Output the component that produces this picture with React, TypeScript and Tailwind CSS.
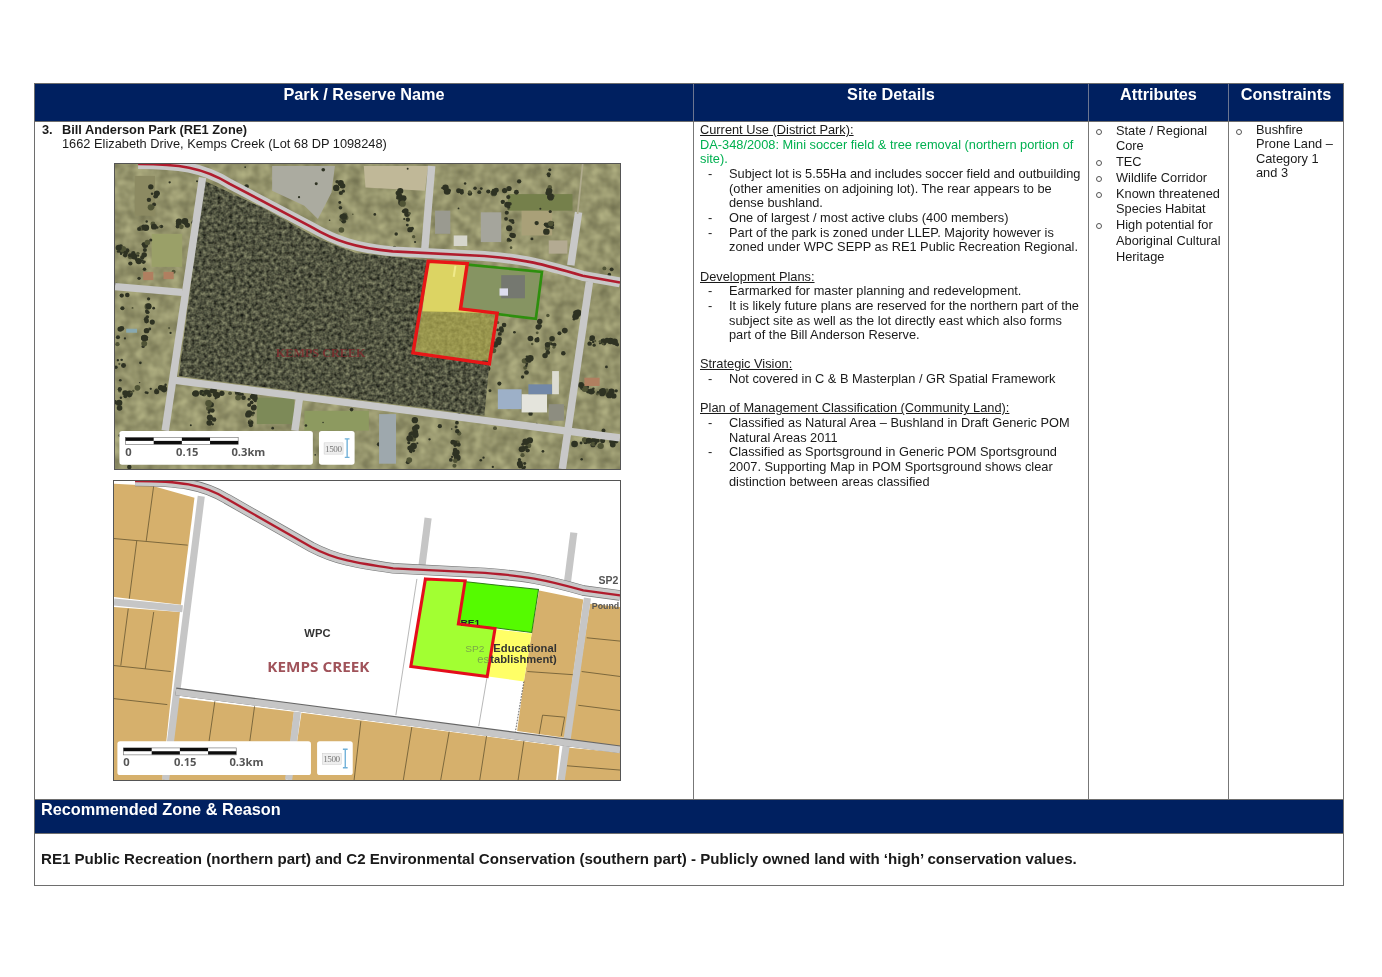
const font = { fontFamily: '"Liberation Sans", Arial, sans-serif' };

// seeded random so the map looks the same on every render
function makeRandom(seed: number) {
  let s = seed;
  return () => {
    s = (s * 16807) % 2147483647;
    return (s - 1) / 2147483646;
  };
}

function HeaderCell({ children, last }: { children: string; last?: boolean }) {
  return (
    <div className={`h-full pt-[1px] text-center text-[16.3px] leading-[19px] font-bold text-white ${last ? "" : "border-r border-[#6b7590]"}`}>
      {children}
    </div>
  );
}

function Underlined({ children }: { children: string }) {
  return <div className="underline underline-offset-1">{children}</div>;
}

function DashItem({ lines }: { lines: string[] }) {
  return (
    <div className="flex">
      <span className="w-[29px] pl-[8px]">-</span>
      <div className="whitespace-nowrap">
        {lines.map((l) => (
          <div key={l}>{l}</div>
        ))}
      </div>
    </div>
  );
}

function CircleItem({ lines }: { lines: string[] }) {
  return (
    <div className="flex">
      <span className="w-[27px] pl-[7px] pt-[6px]">
        <span className="block h-[6px] w-[6px] rounded-full border border-[#555]" />
      </span>
      <div className="whitespace-nowrap">
        {lines.map((l) => (
          <div key={l}>{l}</div>
        ))}
      </div>
    </div>
  );
}

function ScaleLegend({ x, y }: { x: number; y: number }) {
  return (
    <g transform={`translate(${x} ${y})`}>
      <rect x="0" y="0" width="570" height="102" rx="8" fill="#fff" />
      <rect x="18" y="20" width="332" height="21" fill="#fff" stroke="#777" strokeWidth="2" />
      <rect x="18" y="20" width="83" height="10" fill="#111" />
      <rect x="101" y="30" width="83" height="10" fill="#111" />
      <rect x="184" y="20" width="83" height="10" fill="#111" />
      <rect x="267" y="30" width="83" height="10" fill="#111" />
      <g fontFamily='"Open Sans", sans-serif' fontWeight="700" fontSize="33" fill="#555">
        <text x="17" y="76">0</text>
        <text x="167" y="76">0.15</text>
        <text x="330" y="76">0.3km</text>
      </g>
      <rect x="588" y="0" width="105" height="102" rx="8" fill="#fff" />
      <rect x="603" y="36" width="56" height="34" fill="#eee" stroke="#bbb" />
      <text x="606" y="63" fontFamily='"Liberation Serif", serif' fontSize="27" fill="#777" textLength="50">1500</text>
      <path d="M664 24h14M671 24v56M664 80h14" stroke="#6fb0d8" strokeWidth="4" fill="none" />
    </g>
  );
}

// fence lines in the aerial photo, trees grow along them
const fenceLines = [
  [110, 215, 270, 200],
  [165, 40, 120, 390],
  [50, 280, 130, 320],
  [45, 720, 200, 700],
  [70, 410, 45, 800],
  [150, 420, 130, 620],
  [240, 720, 420, 720],
  [335, 690, 320, 820],
  [450, 710, 440, 820],
  [700, 60, 720, 230],
  [880, 100, 920, 260],
  [1000, 100, 1230, 110],
  [1190, 120, 1220, 300],
  [1330, 40, 1320, 240],
  [1180, 500, 1130, 660],
  [1290, 500, 1250, 650],
  [1420, 460, 1300, 600],
  [930, 790, 900, 940],
  [1050, 800, 1040, 940],
  [1260, 840, 1240, 940],
  [1440, 560, 1520, 570],
  [1410, 700, 1520, 720],
  [1400, 860, 1520, 870],
];

function AerialMap() {
  const rnd = makeRandom(4711);
  const trees: { x: number; y: number; r: number }[] = [];
  fenceLines.forEach(([x1, y1, x2, y2]) => {
    for (let i = 0; i < 20; i++) {
      const t = rnd();
      trees.push({ x: x1 + (x2 - x1) * t + (rnd() - 0.5) * 22, y: y1 + (y2 - y1) * t + (rnd() - 0.5) * 22, r: 3 + rnd() * 7 });
    }
  });
  for (let i = 0; i < 110; i++) {
    trees.push({ x: 42 + rnd() * 1488, y: 24 + rnd() * 922, r: 2 + rnd() * 5 });
  }
  const road = "M110 24C230 24 300 34 380 84L620 214C690 256 750 278 860 288L1130 302C1250 312 1300 326 1420 362L1530 382";
  return (
    <svg viewBox="42 24 1488 922" preserveAspectRatio="none" className="block h-[307px] w-[507px] border border-[#555]">
      <defs>
        <filter id="soft" x="0" y="0" width="100%" height="100%">
          <feGaussianBlur stdDeviation="2.2" />
        </filter>
        <filter id="forestNoise" x="0" y="0" width="100%" height="100%" colorInterpolationFilters="sRGB">
          <feTurbulence type="fractalNoise" baseFrequency="0.09" numOctaves="2" seed="8" />
          <feColorMatrix values="0.6 0 0 0 0.02  0.6 0 0 0 0.03  0.47 0 0 0 0.02  0 0 0 0 1" />
          <feGaussianBlur stdDeviation="2" />
        </filter>
        <filter id="fieldNoise" x="0" y="0" width="100%" height="100%" colorInterpolationFilters="sRGB">
          <feTurbulence type="fractalNoise" baseFrequency="0.03" numOctaves="2" seed="3" />
          <feColorMatrix values="1 0 0 0 0.08  1 0 0 0 0.08  0.8 0 0 0 0.02  0 0 0 0 1" />
        </filter>
        <clipPath id="forestClip">
          <polygon points="305,75 480,158 640,250 750,292 965,315 920,600 1145,630 1130,785 230,665" />
        </clipPath>
        <clipPath id="lotClip">
          <polygon points="948,470 1168,475 1145,628 920,595" />
        </clipPath>
      </defs>
      <g filter="url(#soft)">
        <rect x="42" y="24" width="1488" height="922" fill="#95946c" />
        <rect x="42" y="24" width="1488" height="922" filter="url(#fieldNoise)" opacity="0.3" />
        {/* cleared land and sheds */}
        <polygon points="505,30 690,30 680,110 640,190 600,150 505,105" fill="#ababa0" />
        <polygon points="775,30 965,30 955,105 780,95" fill="#c0b898" />
        <rect x="1240" y="160" width="90" height="80" fill="#a9a078" />
        <rect x="1200" y="115" width="190" height="50" fill="#75804c" />
        <rect x="150" y="235" width="90" height="100" fill="#9aa068" />
        <rect x="100" y="60" width="60" height="120" fill="#8c8a62" />
        <rect x="600" y="770" width="190" height="60" fill="#8d9a60" />
        <rect x="460" y="730" width="110" height="80" fill="#7d8a58" />
        {trees.map((t, i) => (
          <circle key={i} cx={t.x} cy={t.y} r={t.r} fill={i % 6 === 0 ? "#4f5236" : "#2f3324"} />
        ))}
        {/* buildings */}
        <rect x="985" y="165" width="45" height="70" fill="#9a9a90" />
        <rect x="1120" y="170" width="60" height="90" fill="#a5a59c" />
        <rect x="1040" y="240" width="40" height="32" fill="#d6d6cc" />
        <rect x="1320" y="255" width="55" height="40" fill="#b3aa92" />
        <rect x="125" y="350" width="30" height="25" fill="#b07f60" />
        <rect x="185" y="350" width="30" height="22" fill="#b07f60" />
        <rect x="1240" y="720" width="75" height="55" fill="#e4e4dc" />
        <rect x="1170" y="705" width="70" height="60" fill="#9db0c8" />
        <rect x="1260" y="690" width="70" height="30" fill="#7288a8" />
        <rect x="1330" y="650" width="20" height="70" fill="#dcdcd2" />
        <rect x="1320" y="750" width="45" height="50" fill="#8d8d80" />
        <rect x="1425" y="670" width="45" height="25" fill="#b07f60" />
        <rect x="820" y="780" width="50" height="150" fill="#9ea8ad" />
        <rect x="75" y="522" width="32" height="12" fill="#88a8b0" />
        {/* bushland */}
        <rect x="200" y="60" width="1000" height="740" filter="url(#forestNoise)" clipPath="url(#forestClip)" />
        {/* subject lot */}
        <polygon points="1080,328 1300,350 1282,492 1170,478 1060,462" fill="#869462" />
        <rect x="1180" y="360" width="70" height="70" fill="#74786f" />
        <rect x="1175" y="400" width="25" height="22" fill="#dde" />
        <polygon points="965,318 1080,325 1060,462 1168,475 1150,620 925,595 948,470" fill="#b8b253" />
        <g clipPath="url(#lotClip)" opacity="0.3">
          <rect x="900" y="460" width="290" height="180" filter="url(#forestNoise)" />
        </g>
        <polygon points="965,318 1080,325 1060,462 1168,475 948,468" fill="#dcd464" />
        <line x1="1045" y1="332" x2="1040" y2="365" stroke="#f0ea8a" strokeWidth="6" />
        {/* roads */}
        <g fill="none" stroke="#c8c8c8" strokeWidth="22">
          <path d="M300 65L190 830" />
          <path d="M42 395L240 412" />
          <path d="M220 678L1530 852" />
          <path d="M1440 380L1360 946" />
          <path d="M975 30L955 280" />
          <path d="M1408 170L1385 330" />
          <path d="M585 735L572 830" />
        </g>
        <path d="M1420 24L1405 175" stroke="#b0ab8e" strokeWidth="5" fill="none" />
        <path d={road} fill="none" stroke="#c8c8c8" strokeWidth="30" />
        <path d={road} fill="none" stroke="#b01f2d" strokeWidth="8" />
        <polyline points="1080,328 1300,350 1282,492 1170,478" fill="none" stroke="#2f8f10" strokeWidth="8" />
        <polygon points="965,318 1080,325 1060,462 1168,475 1145,628 920,595" fill="none" stroke="#e81418" strokeWidth="10" />
        <text x="648" y="608" textAnchor="middle" fontFamily='"Liberation Serif", serif' fontWeight="700" fontSize="36" fill="#7f2a2d" opacity="0.8">KEMPS CREEK</text>
        <ScaleLegend x={55} y={831} />
      </g>
    </svg>
  );
}

function ZoningMap() {
  const road = "M100 14C230 14 300 24 370 68L620 214C690 252 750 262 860 278L1130 292C1250 302 1300 310 1420 345L1528 360";
  return (
    <svg viewBox="38 14 1490 904" preserveAspectRatio="none" className="ml-[-1px] block h-[301px] w-[508px] border border-[#555]">
      <defs>
        <filter id="soft2" x="0" y="0" width="100%" height="100%">
          <feGaussianBlur stdDeviation="1.8" />
        </filter>
      </defs>
      <g filter="url(#soft2)">
        <rect x="38" y="14" width="1490" height="904" fill="#fff" />
        <g fill="#d6b06c">
          <polygon points="38,22 150,28 275,65 235,388 38,365" />
          <polygon points="38,395 232,410 180,918 38,918" />
          <polygon points="215,668 568,712 545,918 180,918" />
          <polygon points="590,715 1350,815 1340,918 560,918" />
          <polygon points="1290,345 1420,372 1365,790 1225,770 1245,620 1268,475" />
          <polygon points="1440,385 1528,395 1528,825 1378,795" />
          <polygon points="1372,820 1528,835 1528,918 1345,918" />
        </g>
        {/* lot boundaries */}
        <g fill="none" stroke="#6b5a34" strokeWidth="2.5">
          <path d="M155 28L133 195M38 188L255 208M105 195L83 370" />
          <path d="M38 572L205 590M38 672L195 690M155 410L130 582M80 400L58 572" />
          <path d="M335 680L318 800M452 695L438 800" />
          <path d="M765 740L745 918M915 758L890 918M1025 772L1000 918M1135 785L1115 918M1245 800L1228 918" />
          <path d="M1255 590L1395 600M1430 488L1528 498M1415 590L1528 605M1405 692L1528 708" />
          <path d="M1300 722L1365 728L1355 785M1290 780L1300 722M1372 875L1528 888" />
        </g>
        <g fill="none" stroke="#aaa" strokeWidth="2.5">
          <path d="M930 310L868 722M1136 610L1112 755" />
        </g>
        <path d="M1245 620L1220 772" stroke="#222" strokeWidth="2" strokeDasharray="5 4" fill="none" />
        <polygon points="1068,318 1288,342 1268,472 1160,458 1050,448" fill="#55fb00" stroke="#2e7d16" strokeWidth="3" />
        <polygon points="955,310 1072,316 1052,446 1160,460 1137,605 912,575" fill="#a2ff30" />
        <polygon points="1160,462 1268,475 1245,620 1140,605" fill="#ffff66" />
        <text x="1445" y="400" fontFamily='"Liberation Sans", sans-serif' fontSize="26" fontWeight="700" fill="#555">Pound</text>
        <text x="1058" y="452" fontFamily='"Liberation Sans", sans-serif' fontSize="30" fontWeight="700" fill="#222">RE1</text>
        {/* roads */}
        <g fill="none" stroke="#c6c6c6" strokeWidth="21">
          <path d="M295 60L190 918" />
          <path d="M38 380L240 400" />
          <path d="M1432 368L1355 918" />
          <path d="M963 126L945 270" />
          <path d="M1392 170L1373 322" />
          <path d="M578 712L552 918" />
        </g>
        <path d="M220 650L1528 825" fill="none" stroke="#666" strokeWidth="23" />
        <path d="M220 652L1528 827" fill="none" stroke="#c6c6c6" strokeWidth="20" />
        <path d={road} fill="none" stroke="#777" strokeWidth="32" />
        <path d={road} fill="none" stroke="#c9c9c9" strokeWidth="28" />
        <path d={road} fill="none" stroke="#b01f2d" strokeWidth="7" />
        <polygon points="955,310 1072,316 1052,446 1160,460 1137,605 912,575" fill="none" stroke="#e4101a" strokeWidth="9" />
        <g fontFamily='"Liberation Sans", sans-serif'>
          <text x="637" y="486" textAnchor="middle" fontSize="33" fontWeight="700" fill="#333">WPC</text>
          <text x="640" y="592" textAnchor="middle" fontFamily='"Open Sans", sans-serif' fontSize="45" fontWeight="700" fill="#a0525a">KEMPS CREEK</text>
          <text x="1072" y="530" fontSize="30" fill="#7aa84a">SP2</text>
          <text x="1155" y="530" fontSize="33" fontWeight="700" fill="#333">Educational</text>
          <text x="1108" y="564" fontSize="33" fill="#7aa84a">es</text>
          <text x="1146" y="564" fontSize="33" fontWeight="700" fill="#333">tablishment)</text>
          <text x="1465" y="325" fontSize="31" fontWeight="700" fill="#555">SP2</text>
        </g>
        <ScaleLegend x={48} y={801} />
      </g>
    </svg>
  );
}

export default function App() {
  return (
    <div className="min-h-[977px] bg-white pl-[34px] pt-[83px] text-[12.8px] leading-[14.65px] text-[#1a1a1a] blur-[0.35px]" style={font}>
      <div className="flex h-[803px] w-[1310px] flex-col border border-[#6e6e6e]">
        {/* Column headers */}
        <div className="grid h-[37px] grid-cols-[659px_395px_140px_1fr] bg-[#002060]">
          <HeaderCell>Park / Reserve Name</HeaderCell>
          <HeaderCell>Site Details</HeaderCell>
          <HeaderCell>Attributes</HeaderCell>
          <HeaderCell last>Constraints</HeaderCell>
        </div>

        {/* Main row */}
        <div className="grid h-[678px] grid-cols-[659px_395px_140px_1fr] border-t border-[#6e6e6e]">
          <div className="border-r border-[#777] pt-[0.5px]">
            <div className="flex pl-[7px]">
              <span className="w-[20px] font-bold">3.</span>
              <div>
                <div className="font-bold">Bill Anderson Park (RE1 Zone)</div>
                <div>1662 Elizabeth Drive, Kemps Creek (Lot 68 DP 1098248)</div>
              </div>
            </div>
            <div className="ml-[79px] mt-[11px] flex flex-col gap-[10px]">
              <AerialMap />
              <ZoningMap />
            </div>
          </div>

          <div className="border-r border-[#777] pl-[6px] pt-[1px]">
            <Underlined>Current Use (District Park):</Underlined>
            <div className="whitespace-nowrap text-[#00b050]">
              <div>DA-348/2008: Mini soccer field &amp; tree removal (northern portion of</div>
              <div>site).</div>
            </div>
            <DashItem lines={["Subject lot is 5.55Ha and includes soccer field and outbuilding", "(other amenities on adjoining lot). The rear appears to be", "dense bushland."]} />
            <DashItem lines={["One of largest / most active clubs (400 members)"]} />
            <DashItem lines={["Part of the park is zoned under LLEP. Majority however is", "zoned under WPC SEPP as RE1 Public Recreation Regional."]} />

            <div className="mt-[14.65px]">
              <Underlined>Development Plans:</Underlined>
              <DashItem lines={["Earmarked for master planning and redevelopment."]} />
              <DashItem lines={["It is likely future plans are reserved for the northern part of the", "subject site as well as the lot directly east which also forms", "part of the Bill Anderson Reserve."]} />
            </div>

            <div className="mt-[14.65px]">
              <Underlined>Strategic Vision:</Underlined>
              <DashItem lines={["Not covered in C & B Masterplan / GR Spatial Framework"]} />
            </div>

            <div className="mt-[14.65px]">
              <Underlined>Plan of Management Classification (Community Land):</Underlined>
              <DashItem lines={["Classified as Natural Area – Bushland in Draft Generic POM", "Natural Areas 2011"]} />
              <DashItem lines={["Classified as Sportsground in Generic POM Sportsground", "2007. Supporting Map in POM Sportsground shows clear", "distinction between areas classified"]} />
            </div>
          </div>

          <div className="border-r border-[#777] pt-[0.5px] leading-[15.8px]">
            <CircleItem lines={["State / Regional", "Core"]} />
            <CircleItem lines={["TEC"]} />
            <CircleItem lines={["Wildlife Corridor"]} />
            <CircleItem lines={["Known threatened", "Species Habitat"]} />
            <CircleItem lines={["High potential for", "Aboriginal Cultural", "Heritage"]} />
          </div>

          <div className="pt-[0.5px]">
            <CircleItem lines={["Bushfire", "Prone Land –", "Category 1", "and 3"]} />
          </div>
        </div>

        {/* Recommendation */}
        <div className="h-[34px] border-t border-[#6e6e6e] bg-[#002060] pl-[6px] text-[16.3px] leading-[18px] font-bold text-white">
          Recommended Zone &amp; Reason
        </div>
        <div className="flex flex-1 items-center border-t border-[#6e6e6e] pb-[2px] pl-[6px] text-[15.1px] font-bold leading-[18px]">
          RE1 Public Recreation (northern part) and C2 Environmental Conservation (southern part) - Publicly owned land with ‘high’ conservation values.
        </div>
      </div>
    </div>
  );
}
